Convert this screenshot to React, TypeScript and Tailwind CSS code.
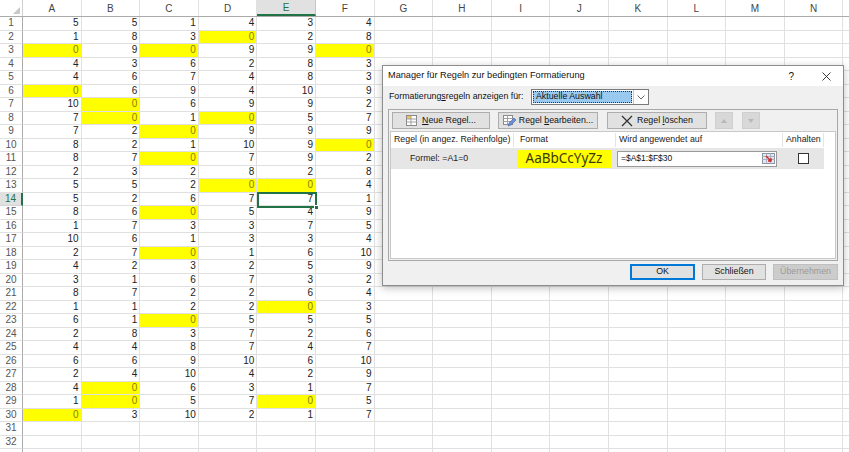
import React from "react";

const DATA: number[][] = [
  [5, 5, 1, 4, 3, 4],
  [1, 8, 3, 0, 2, 8],
  [0, 9, 0, 9, 9, 0],
  [4, 3, 6, 2, 8, 3],
  [4, 6, 7, 4, 8, 3],
  [0, 6, 9, 4, 10, 9],
  [10, 0, 6, 9, 9, 2],
  [7, 0, 1, 0, 5, 7],
  [7, 2, 0, 9, 9, 9],
  [8, 2, 1, 10, 9, 0],
  [8, 7, 0, 7, 9, 2],
  [2, 3, 2, 8, 2, 8],
  [5, 5, 2, 0, 0, 4],
  [5, 2, 6, 7, 7, 1],
  [8, 6, 0, 5, 4, 9],
  [1, 7, 3, 3, 7, 5],
  [10, 6, 1, 3, 3, 4],
  [2, 7, 0, 1, 6, 10],
  [4, 2, 3, 2, 5, 9],
  [3, 1, 6, 7, 3, 2],
  [8, 7, 2, 2, 6, 4],
  [1, 1, 2, 2, 0, 3],
  [6, 1, 0, 5, 5, 5],
  [2, 8, 3, 7, 2, 6],
  [4, 4, 8, 7, 4, 7],
  [6, 6, 9, 10, 6, 10],
  [2, 4, 10, 4, 2, 9],
  [4, 0, 6, 3, 1, 7],
  [1, 0, 5, 7, 0, 5],
  [0, 3, 10, 2, 1, 7],
];

const COLS = ["A", "B", "C", "D", "E", "F", "G", "H", "I", "J", "K", "L", "M", "N"];
const ROW_COUNT = 33;

function HeaderRow() {
  return (
    <div className="flex h-[17px] border-b border-[#ababab] bg-white text-[10px] text-[#444]">
      <div className="relative w-[23px] shrink-0 border-r border-[#d0d0d0]">
        <div className="absolute bottom-[2px] right-[2px] h-0 w-0 border-l-[7px] border-t-[7px] border-l-transparent border-t-transparent border-r-0 border-b-[7px] border-b-[#c8c8c8]" />
      </div>
      {COLS.map((c) => (
        <div
          key={c}
          className={
            c === "E"
              ? "flex w-[58.6px] shrink-0 items-center justify-center border-r border-[#c6c6c6] border-b-2 border-b-[#217346] bg-[#e1e1e1] text-[#217346]"
              : "flex w-[58.6px] shrink-0 items-center justify-center border-r border-[#e1e1e1]"
          }
        >
          {c}
        </div>
      ))}
      <div className="flex-1" />
    </div>
  );
}

function SheetRow({ r }: { r: number }) {
  const values = DATA[r - 1];
  return (
    <div className="flex h-[13.5px] text-[10px] leading-none">
      <div
        className={
          r === 14
            ? "flex w-[23px] shrink-0 items-center justify-center border-b border-[#d4d4d4] border-r-2 border-r-[#217346] bg-[#e1e1e1] text-[#217346]"
            : "flex w-[23px] shrink-0 items-center justify-center border-b border-[#e1e1e1] border-r border-r-[#ababab] bg-white text-[#555]"
        }
      >
        {r < ROW_COUNT ? r : ""}
      </div>
      {COLS.map((c, i) => {
        const v = values && i < 6 ? values[i] : undefined;
        const hit = v === 0;
        return (
          <div
            key={c}
            className={
              hit
                ? "flex w-[58.6px] shrink-0 items-center justify-end border-b border-r border-[#e0e0e0] bg-[#ffff00] pr-[2px] text-[#8a7d00]"
                : "flex w-[58.6px] shrink-0 items-center justify-end border-b border-r border-[#e0e0e0] bg-white pr-[2px] text-[#222]"
            }
          >
            {v !== undefined ? v : ""}
          </div>
        );
      })}
      <div className="flex-1 border-b border-[#e0e0e0]" />
    </div>
  );
}

function NewRuleIcon() {
  return (
    <svg width="11" height="11" viewBox="0 0 11 11">
      <rect x="0.5" y="0.5" width="10" height="10" fill="#fff" stroke="#8a8a8a" />
      <rect x="1" y="1" width="4" height="3" fill="#f2c14e" />
      <line x1="0.5" y1="4" x2="10.5" y2="4" stroke="#a0a0a0" />
      <line x1="0.5" y1="7" x2="10.5" y2="7" stroke="#a0a0a0" />
      <line x1="5" y1="0.5" x2="5" y2="10.5" stroke="#a0a0a0" />
    </svg>
  );
}

function EditRuleIcon() {
  return (
    <svg width="13" height="12" viewBox="0 0 13 12">
      <rect x="0.5" y="0.5" width="9" height="9" fill="#fff" stroke="#8a8a8a" />
      <line x1="0.5" y1="3.5" x2="9.5" y2="3.5" stroke="#a0a0a0" />
      <line x1="0.5" y1="6.5" x2="9.5" y2="6.5" stroke="#a0a0a0" />
      <line x1="4.5" y1="0.5" x2="4.5" y2="9.5" stroke="#a0a0a0" />
      <path d="M5 11 L6 8 L11 3 L13 5 L8 10 Z" fill="#6d8fd6" stroke="#3f5fa8" strokeWidth="0.6" />
    </svg>
  );
}

function DeleteIcon() {
  return (
    <svg width="12" height="12" viewBox="0 0 12 12">
      <path d="M1 1 L11 11 M11 1 L1 11" stroke="#333" strokeWidth="1.3" />
    </svg>
  );
}

function RangeIcon() {
  return (
    <svg width="13" height="11" viewBox="0 0 13 11">
      <rect x="0.5" y="0.5" width="12" height="10" fill="#e4e8ee" stroke="#8a94a4" />
      <line x1="0.5" y1="3.5" x2="12.5" y2="3.5" stroke="#a8b2c2" />
      <line x1="0.5" y1="6.5" x2="12.5" y2="6.5" stroke="#a8b2c2" />
      <line x1="4.5" y1="0.5" x2="4.5" y2="10.5" stroke="#a8b2c2" />
      <line x1="8.5" y1="0.5" x2="8.5" y2="10.5" stroke="#a8b2c2" />
      <path d="M4 3 L9 8 M9 5 L9 8 L6 8" stroke="#d42020" strokeWidth="1.3" fill="none" />
    </svg>
  );
}

function Dialog() {
  return (
    <div className="absolute left-[382px] top-[65px] flex h-[221px] w-[462px] flex-col whitespace-nowrap border border-[#8c8c8c] bg-[#f0f0f0] text-[8.8px] text-[#111] shadow-[0_2px_8px_rgba(0,0,0,0.25)] [font-family:'Liberation_Sans',Arial,sans-serif]">
      <div className="flex h-[20px] shrink-0 items-center bg-white pl-[5px] text-[9.2px]">
        <span>Manager für Regeln zur bedingten Formatierung</span>
        <span className="ml-auto mr-[28px] text-[10px]">?</span>
        <svg width="9" height="9" viewBox="0 0 9 9" className="mr-[12px]">
          <path d="M0.5 0.5 L8.5 8.5 M8.5 0.5 L0.5 8.5" stroke="#222" strokeWidth="0.9" />
        </svg>
      </div>

      <div className="flex flex-1 flex-col px-[5px]">
        <div className="mt-[3px] flex h-[16px] items-center">
          <span className="w-[143px] pl-[1px]">
            Formatierung<span className="underline">s</span>regeln anzeigen für:
          </span>
          <div className="flex h-[16px] w-[118px] items-center border border-[#7a7a7a] bg-white">
            <div className="ml-[1px] flex h-[12px] w-[99px] items-center border border-dotted border-[#333] bg-[#99c9ef] pl-[2px]">
              Aktuelle Auswahl
            </div>
            <div className="ml-auto flex h-full w-[15px] items-center justify-center border-l border-[#c8c8c8]">
              <svg width="8" height="5" viewBox="0 0 8 5">
                <path d="M0.5 0.5 L4 4 L7.5 0.5" stroke="#555" fill="none" strokeWidth="0.9" />
              </svg>
            </div>
          </div>
        </div>

        <div className="mt-[4px] flex h-[152px] w-[450px] flex-col border border-[#a8a8a8]">
          <div className="flex h-[21px] shrink-0 items-center pl-[3px]">
            <div className="flex h-[17px] w-[98px] items-center justify-center gap-[5px] border border-[#adadad] bg-[#e1e1e1]">
              <NewRuleIcon />
              <span>
                <span className="underline">N</span>eue Regel...
              </span>
            </div>
            <div className="ml-[8px] flex h-[17px] w-[100px] items-center justify-center gap-[3px] border border-[#adadad] bg-[#e1e1e1]">
              <EditRuleIcon />
              <span>
                Regel <span className="underline">b</span>earbeiten...
              </span>
            </div>
            <div className="ml-[9px] flex h-[17px] w-[100px] items-center justify-center gap-[4px] border border-[#adadad] bg-[#e1e1e1]">
              <DeleteIcon />
              <span>
                Regel <span className="underline">l</span>öschen
              </span>
            </div>
            <div className="ml-[8px] flex h-[17px] w-[18px] items-center justify-center border border-[#cfcfcf] bg-[#d8d8d8]">
              <svg width="6" height="4" viewBox="0 0 6 4">
                <path d="M0 4 L3 0 L6 4 Z" fill="#b8b8b8" />
              </svg>
            </div>
            <div className="ml-[9px] flex h-[17px] w-[18px] items-center justify-center border border-[#cfcfcf] bg-[#d8d8d8]">
              <svg width="6" height="4" viewBox="0 0 6 4">
                <path d="M0 0 L3 4 L6 0 Z" fill="#b8b8b8" />
              </svg>
            </div>
          </div>

          <div className="mx-[1px] mb-[1px] flex flex-1 flex-col border border-[#c8c8c8] bg-white">
            <div className="flex h-[16px] shrink-0 items-center text-[#222]">
              <div className="w-[123px] overflow-hidden border-r border-[#e4e4e4] pl-[3px]">Regel (in angez. Reihenfolge)</div>
              <div className="w-[102px] border-r border-[#e4e4e4] pl-[6px]">Format</div>
              <div className="w-[167px] border-r border-[#e4e4e4] pl-[3px]">Wird angewendet auf</div>
              <div className="w-[41px] border-r border-[#e4e4e4] pl-[3px]">Anhalten</div>
            </div>
            <div className="flex h-[21px] w-[433px] shrink-0 items-center bg-[#e6e6e6]">
              <div className="w-[126px] pl-[19px] text-[#222]">Formel: =A1=0</div>
              <div className="flex h-[18px] w-[94px] items-center justify-center bg-[#ffff00] text-[13.5px] text-[#3a3a00] [font-family:'Noto_Sans',sans-serif]">
                AaBbCcYyZz
              </div>
              <div className="ml-[6px] flex h-[16px] w-[160px] items-center border border-[#9a9a9a] bg-white pl-[3px] text-[8.5px]">
                <span>=$A$1:$F$30</span>
                <span className="ml-auto mr-[1px] flex items-center">
                  <RangeIcon />
                </span>
              </div>
              <div className="ml-[21px] h-[11px] w-[11px] border border-[#333] bg-white" />
            </div>
          </div>
        </div>

        <div className="mt-[3px] flex h-[16px] items-center justify-end gap-[7px]">
          <div className="flex h-[16px] w-[65px] items-center justify-center border-2 border-[#0078d7] bg-[#e1e1e1]">OK</div>
          <div className="flex h-[16px] w-[64px] items-center justify-center border border-[#adadad] bg-[#e1e1e1]">Schließen</div>
          <div className="flex h-[16px] w-[65px] items-center justify-center border border-[#bfbfbf] bg-[#cccccc] text-[#9a9a9a]">Übernehmen</div>
        </div>
      </div>
    </div>
  );
}

export default function App() {
  const rows = Array.from({ length: ROW_COUNT }, (_, i) => i + 1);
  return (
    <div className="relative h-[452px] w-[849px] overflow-hidden bg-white [font-family:'Liberation_Sans',Arial,sans-serif]">
      <HeaderRow />
      {rows.map((r) => (
        <SheetRow key={r} r={r} />
      ))}
      <div className="pointer-events-none absolute left-[257px] top-[192px] h-[16px] w-[60px] border-2 border-[#217346]" />
      <div className="absolute left-[314px] top-[205px] h-[5px] w-[5px] border border-white bg-[#217346]" />
      <Dialog />
    </div>
  );
}
